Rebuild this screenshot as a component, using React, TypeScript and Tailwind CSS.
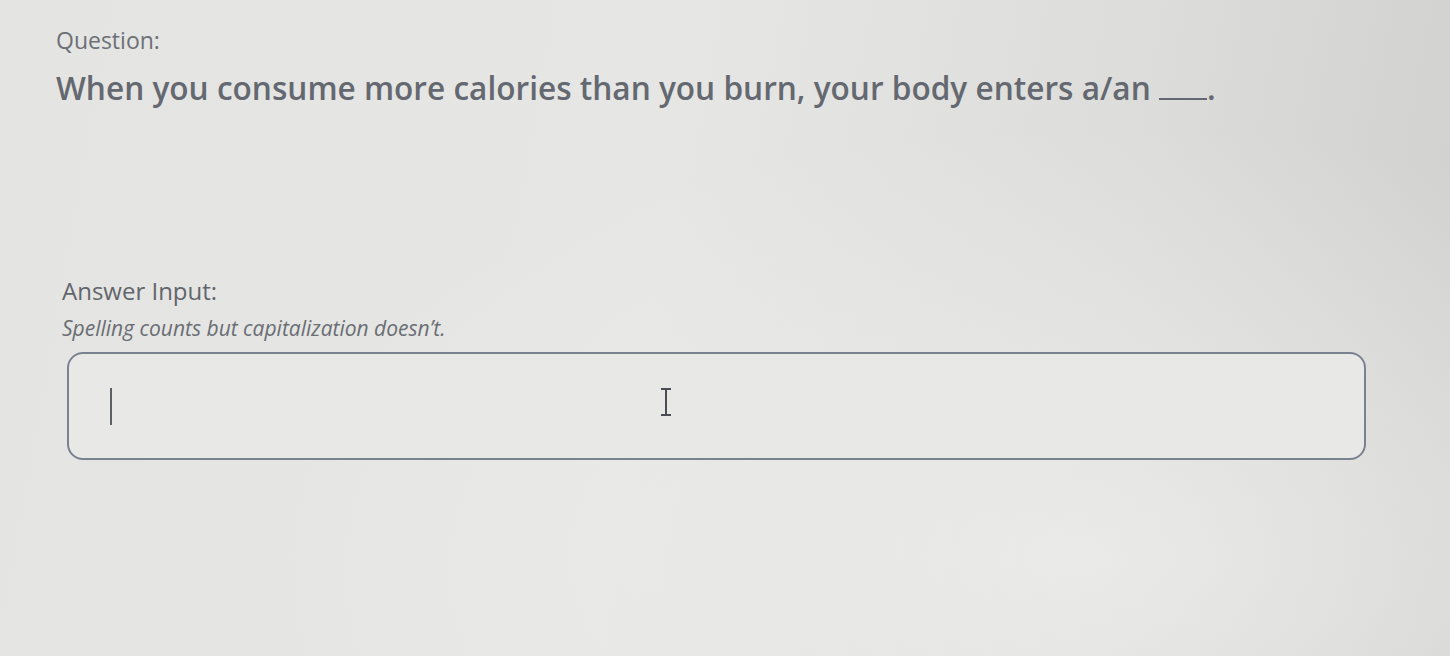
import React from "react";

export default function App() {
  return (
    <div
      className="relative w-[1450px] h-[656px] overflow-hidden bg-[linear-gradient(100deg,#e4e4e2_0%,#e6e6e4_45%,#dcdcda_75%,#cfd0ce_100%)] text-[#6c7076]"
      style={{ fontFamily: "'Open Sans', Lato, sans-serif" }}
    >
      <div className="pointer-events-none absolute inset-0 bg-[radial-gradient(ellipse_at_75%_85%,rgba(240,240,238,0.7),transparent_55%)]" />
      <div className="relative flex flex-col pl-[56px] pt-[25px]">
        <div className="text-[23px] leading-[30px]">Question:</div>
        <div className="mt-[12px] text-[31.6px] leading-[42px] font-semibold text-[#646870]">
          When you consume more calories than you burn, your body enters a/an{" "}
          <span className="inline-block w-[48px] border-b-2 border-[#646870] align-baseline"></span>.
        </div>

        <div className="mt-[167px] pl-[6px] text-[24px] leading-[30px] text-[#62666c]">Answer Input:</div>
        <div className="mt-[9px] pl-[6px] text-[21px] leading-[26px] italic text-[#6a6e74]">
          Spelling counts but capitalization doesn&#x2019;t.
        </div>

        <div className="mt-[11px] ml-[11px] w-[1299px] h-[108px] rounded-[16px] border-2 border-[#7a8292] bg-[#e8e8e6] flex items-center relative">
          <div className="ml-[41px] w-[2px] h-[37px] bg-[#5c5f66]" />
          <div className="absolute left-[592px] top-[34px] w-[10px] h-[28px] flex flex-col items-center">
            <div className="w-[10px] h-[2px] bg-[#4a4d52]" />
            <div className="w-[2px] flex-1 bg-[#4a4d52]" />
            <div className="w-[10px] h-[2px] bg-[#4a4d52]" />
          </div>
        </div>
      </div>
    </div>
  );
}
